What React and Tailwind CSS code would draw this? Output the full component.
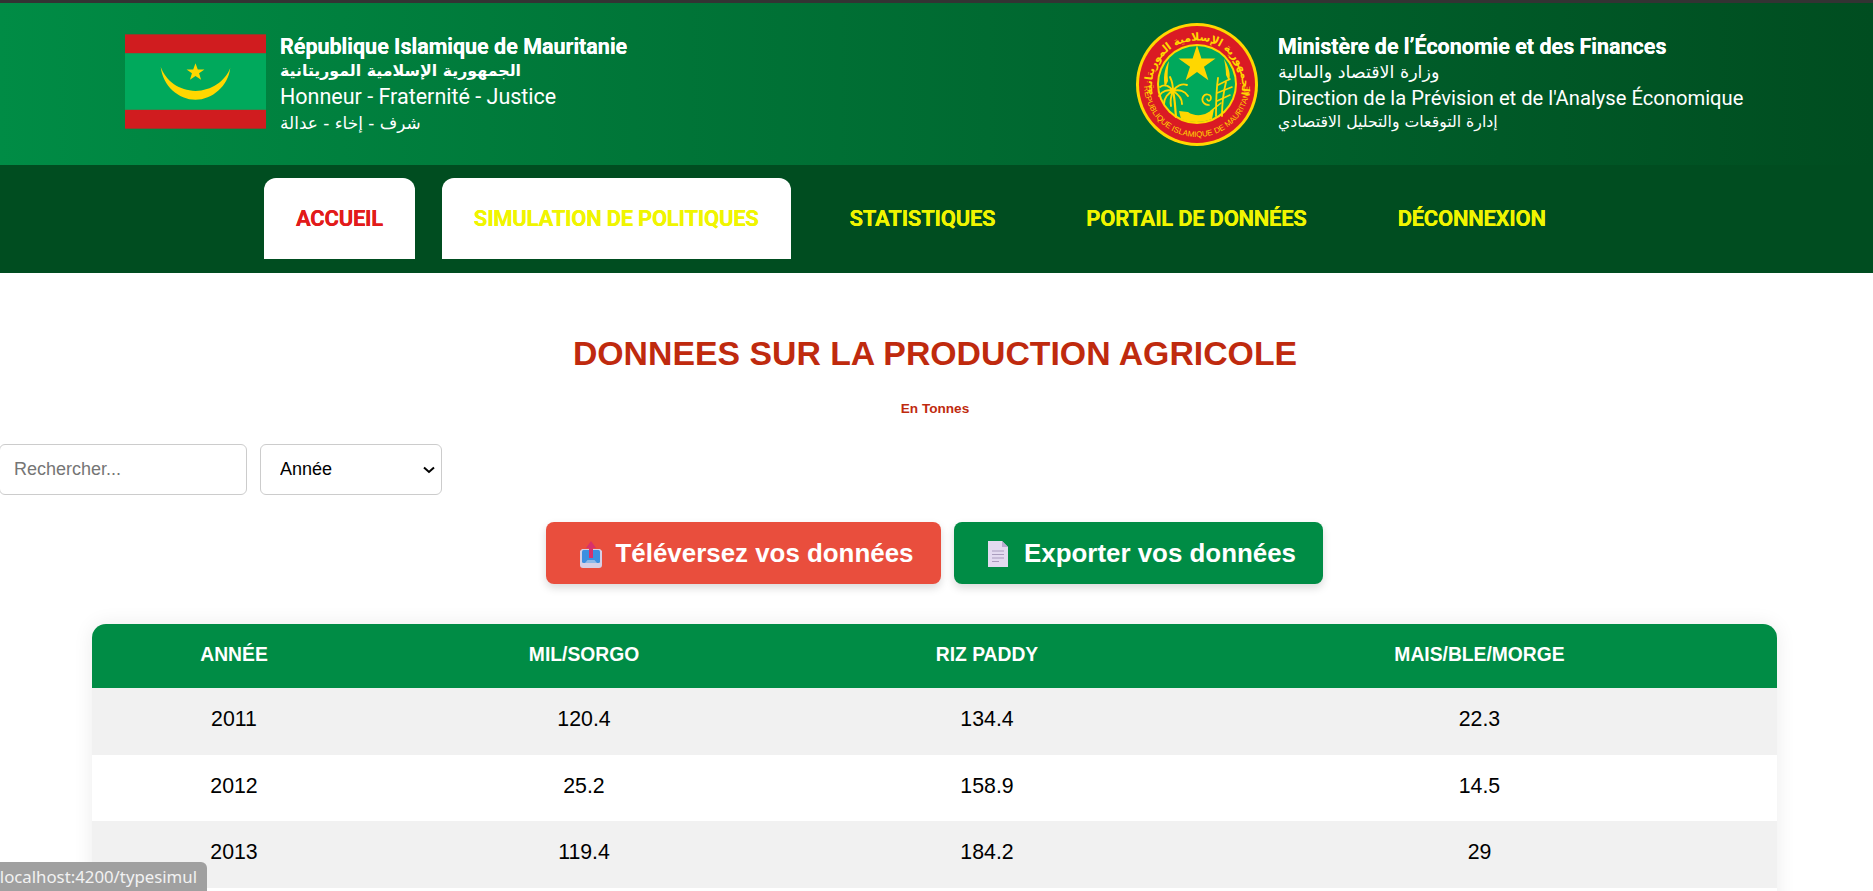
const navItems = [
  { label: 'ACCUEIL', color: 'bg-white text-[#e21b1b]' },
  { label: 'SIMULATION DE POLITIQUES', color: 'bg-white text-[#f0f500]' },
  { label: 'STATISTIQUES', color: 'text-[#f0f500]' },
  { label: 'PORTAIL DE DONNÉES', color: 'text-[#f0f500]' },
  { label: 'DÉCONNEXION', color: 'text-[#f0f500]' },
];

const rows = [
  ['2011', '120.4', '134.4', '22.3'],
  ['2012', '25.2', '158.9', '14.5'],
  ['2013', '119.4', '184.2', '29'],
];

function Flag() {
  return (
    <svg width="141" height="95" viewBox="0 0 142 95" className="mb-[6px] shrink-0">
      <rect width="142" height="95" fill="#d01c1f" />
      <rect y="19" width="142" height="57" fill="#00a95c" />
      <path d="M36 33 C38 52 54 66 71 66 C88 66 104 52 106 34 C101 47 87 57 71 57 C55 57 41 47 36 33 Z" fill="#ffd700" />
      <path d="M71 29 L73.3 35.3 L80 35.3 L74.6 39.3 L76.6 45.8 L71 42 L65.4 45.8 L67.4 39.3 L62 35.3 L68.7 35.3 Z" fill="#ffd700" />
    </svg>
  );
}

function Emblem() {
  return (
    <svg width="122" height="123" viewBox="0 0 122 123" className="shrink-0">
      <defs>
        <path id="arcTop" d="M17 72 A45 45 0 1 1 105 72" />
        <path id="arcBottom" d="M8 61 A53 53 0 0 0 114 61" />
      </defs>
      <ellipse cx="61" cy="61.5" rx="61" ry="61.5" fill="#ffd700" />
      <ellipse cx="61" cy="61.5" rx="58" ry="58.5" fill="#da1a24" />
      <circle cx="61" cy="61" r="40" fill="#ffd700" />
      <circle cx="61" cy="61" r="38" fill="#00a95c" />
      <text fill="#ffd700" fontSize="11" fontWeight="700" fontFamily="'DejaVu Sans', sans-serif">
        <textPath href="#arcTop" startOffset="50%" textAnchor="middle" textLength="160">الجمهورية الإسلامية الموريتانية</textPath>
      </text>
      <text fill="#ffd700" fontSize="8" fontFamily="'Liberation Sans', sans-serif">
        <textPath href="#arcBottom" startOffset="50%" textAnchor="middle">REPUBLIQUE ISLAMIQUE DE MAURITANIE</textPath>
      </text>
      <path d="M61 22 L65.4 35.5 L79.5 35.5 L68 43.8 L72.4 57.3 L61 49 L49.6 57.3 L54 43.8 L42.5 35.5 L56.6 35.5 Z" fill="#ffd700" />
      <path d="M33 38 C28 46 27 56 29 64 L32 58 C31 51 32 44 33 38 Z" fill="#ffd700" />
      <path d="M88 36 C93 44 95 52 93 58 L90 52 C90 46 89 41 88 36 Z" fill="#ffd700" />
      <g stroke="#ffd700" fill="none" strokeLinecap="round">
        <path d="M40 94 C39 84 39 76 37 68" strokeWidth="2.2" />
        <path d="M37 68 C33 62 28 61 24 64 M37 68 C32 66 26 68 23 73 M37 68 C32 70 28 75 28 81 M37 68 C35 73 34 78 35 83 M37 68 C40 63 46 60 51 62 M37 68 C43 66 49 68 52 73 M37 68 C42 71 46 75 46 81 M37 68 C37 63 36 58 34 54" strokeWidth="1.9" />
        <path d="M73 82 C68 82 65 78 67 74 C69 70 75 71 75 75 C75 78 72 79 71 76" strokeWidth="1.7" />
        <path d="M80 93 C80 81 80 69 82 55 M86 93 C86 83 87 71 90 59" strokeWidth="1.8" />
        <path d="M82 62 L94 56 M81 70 L96 64 M81 78 L94 72 M75 88 L85 80" strokeWidth="1.6" />
      </g>
      <path d="M43 88 L52 89 C57 93 66 93 71 90 L78 86 L76 96 C66 100 54 100 45 96 Z" fill="#ffd700" />
    </svg>
  );
}

function UploadIcon() {
  return (
    <svg width="24" height="28" viewBox="0 0 24 28" className="shrink-0">
      <path d="M3 9 H21 L23 11 V25 C23 27 22 28 20 28 H4 C2 28 1 27 1 25 V11 Z" fill="#d6cfe4" />
      <rect x="3" y="10" width="18" height="13" rx="1.5" fill="#3d8fe0" />
      <path d="M6 23 H18 L15.5 20 H8.5 Z" fill="#8db9e8" />
      <path d="M12 1 L17 8 H14 V18 H10 V8 H7 Z" fill="#d8316a" />
    </svg>
  );
}

function FileIcon() {
  return (
    <svg width="22" height="28" viewBox="0 0 22 28" className="shrink-0">
      <path d="M1 1 H15 L21 7 V27 H1 Z" fill="#e3daf0" />
      <path d="M15 1 L21 7 H15 Z" fill="#b9abd0" />
      <path d="M5 11 H17 M5 14.5 H17 M5 18 H17 M5 21.5 H12" stroke="#a99cbd" strokeWidth="1.2" />
    </svg>
  );
}

export default function App() {
  return (
    <div className="relative h-[891px] w-full overflow-hidden bg-white font-['Liberation_Sans',sans-serif] text-black">
      <div className="h-[3px] bg-[#333333]" />

      <header className="flex h-[162px] items-center bg-linear-to-r from-[#008c45] to-[#004d20] font-['Roboto',sans-serif] text-white">
        <div className="flex w-[1136px] items-center gap-[14px] pl-[125px]">
          <Flag />
          <div className="mb-[1px] flex flex-col">
            <span className="text-[21.5px] leading-[26px] font-bold [text-shadow:0_0_0.6px_#ffffff]">République Islamique de Mauritanie</span>
            <span className="font-['DejaVu_Sans',sans-serif] text-[15.8px] leading-[22px] font-bold">الجمهورية الإسلامية الموريتانية</span>
            <span className="text-[21.5px] leading-[30px]">Honneur - Fraternité - Justice</span>
            <span className="font-['DejaVu_Sans',sans-serif] text-[16.9px] leading-[22px]">شرف - إخاء - عدالة</span>
          </div>
        </div>
        <div className="flex items-center gap-[20px]">
          <Emblem />
          <div className="mb-[2px] flex flex-col">
            <span className="text-[21.5px] leading-[26px] font-bold [text-shadow:0_0_0.6px_#ffffff]">Ministère de l’Économie et des Finances</span>
            <span className="font-['DejaVu_Sans',sans-serif] text-[17.5px] leading-[24px]">وزارة الاقتصاد والمالية</span>
            <span className="text-[20.2px] leading-[28px]">Direction de la Prévision et de l'Analyse Économique</span>
            <span className="font-['DejaVu_Sans',sans-serif] text-[15.7px] leading-[20px]">إدارة التوقعات والتحليل الاقتصادي</span>
          </div>
        </div>
      </header>

      <nav className="flex h-[108px] items-start gap-[27px] bg-[#004d20] pt-[13px] pl-[264px] font-['Roboto',sans-serif]">
        {navItems.map((item) => (
          <a
            key={item.label}
            className={`flex h-[81px] items-center rounded-t-[12px] px-[32px] text-[22px] font-bold tracking-[-0.25px] [text-shadow:0_0_0.6px_currentColor] ${item.color}`}
          >
            {item.label}
          </a>
        ))}
      </nav>

      <main>
        <h1 className="mt-[57px] pr-[3px] text-center text-[33.8px] leading-[46px] font-bold text-[#bf2a0e]">
          DONNEES SUR LA PRODUCTION AGRICOLE
        </h1>
        <p className="mt-[25px] pr-[3px] text-center text-[13.6px] leading-[16px] font-bold text-[#bf2a0e]">En Tonnes</p>

        <div className="mt-[27px] -ml-[1px] flex gap-[13px]">
          <input
            placeholder="Rechercher..."
            className="h-[51px] w-[248px] rounded-[6px] border border-[#cccccc] pl-[14px] text-[18px] outline-none placeholder:text-[#757575]"
          />
          <div className="relative">
            <select className="h-[51px] w-[182px] appearance-none rounded-[6px] border border-[#cccccc] bg-white pl-[19px] text-[18px] text-black">
              <option>Année</option>
            </select>
            <svg width="12" height="8" viewBox="0 0 12 8" className="absolute top-[22px] right-[7px]">
              <path d="M1 1.5 L6 6 L11 1.5" fill="none" stroke="#000000" strokeWidth="2" />
            </svg>
          </div>
        </div>

        <div className="mt-[27px] flex justify-center gap-[13px] pr-[4px]">
          <button className="flex h-[62px] w-[395px] items-center justify-center gap-[13px] rounded-[8px] bg-[#e94e3d] pt-[1px] pl-[5px] text-[25.9px] font-bold text-white shadow-[0_4px_8px_rgba(0,0,0,0.15)]">
            <UploadIcon />
            Téléversez vos données
          </button>
          <button className="flex h-[62px] w-[369px] items-center justify-center gap-[15px] rounded-[8px] bg-[#008c45] pt-[1px] pl-[6px] text-[25.9px] font-bold text-white shadow-[0_4px_8px_rgba(0,0,0,0.15)]">
            <FileIcon />
            Exporter vos données
          </button>
        </div>

        <div className="mt-[40px] ml-[92px] w-[1685px] overflow-hidden rounded-t-[14px] shadow-[0_0_20px_rgba(0,0,0,0.08)]">
          <table className="w-full table-fixed border-collapse text-center text-[21.3px]">
            <colgroup>
              <col className="w-[284px]" />
              <col className="w-[416px]" />
              <col className="w-[390px]" />
              <col className="w-[595px]" />
            </colgroup>
            <thead>
              <tr className="h-[64px] bg-[#008c45] text-[19.3px] font-bold text-white">
                <th className="pb-[2px]">ANNÉE</th>
                <th className="pb-[2px]">MIL/SORGO</th>
                <th className="pb-[2px]">RIZ PADDY</th>
                <th className="pb-[2px]">MAIS/BLE/MORGE</th>
              </tr>
            </thead>
            <tbody>
              {rows.map((row, i) => (
                <tr key={row[0]} className={i % 2 === 0 ? 'h-[66.5px] bg-[#f1f1f1]' : 'h-[66.5px] bg-white'}>
                  {row.map((cell, j) => (
                    <td key={j} className="pb-[2px]">{cell}</td>
                  ))}
                </tr>
              ))}
              <tr className="h-[66.5px] bg-white">
                <td colSpan={4} />
              </tr>
            </tbody>
          </table>
        </div>
      </main>

      <div className="absolute bottom-0 left-0 flex h-[29px] w-[207px] items-center justify-end overflow-hidden rounded-tr-[6px] bg-[#a0a0a0] pr-[10px] font-['Noto_Sans',sans-serif] text-[16.8px] whitespace-nowrap text-[#f2f2f2]">
        localhost:4200/typesimul
      </div>
    </div>
  );
}
